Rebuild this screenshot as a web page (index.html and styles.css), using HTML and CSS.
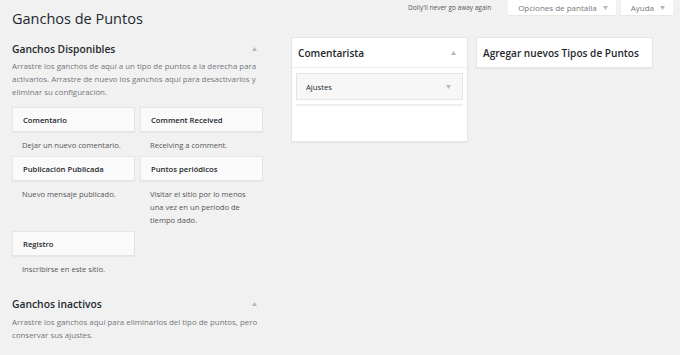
FILE: index.html
```html
<!DOCTYPE html>
<html lang="es">
<head>
    <meta charset="UTF-8">
    <title>Ganchos de Puntos</title>
    <link rel="stylesheet" href="styles.css">
</head>
<body>

    <div class="header">
        <h1>Ganchos de Puntos</h1>
        <div class="meta-links">
            <span class="dolly">Dolly'll never go away again</span>
            <span class="meta-tab">Opciones de pantalla <svg class="arrow" width="5" height="4" viewBox="0 0 5 4"><polygon points="0,0 5,0 2.5,4"/></svg></span>
            <span class="meta-tab">Ayuda <svg class="arrow" width="5" height="4" viewBox="0 0 5 4"><polygon points="0,0 5,0 2.5,4"/></svg></span>
        </div>
    </div>

    <div class="main">
        <div class="hooks-col">
            <div class="section-title">
                <h2>Ganchos Disponibles</h2>
                <svg class="arrow" width="5" height="4" viewBox="0 0 5 4"><polygon points="0,4 5,4 2.5,0"/></svg>
            </div>
            <p class="section-desc">Arrastre los ganchos de aquí a un tipo de puntos a la derecha para activarlos. Arrastre de nuevo los ganchos aquí para desactivarlos y eliminar su configuración.</p>

            <div class="hook-grid">
                <div class="hook">
                    <div class="hook-box">Comentario</div>
                    <div class="hook-desc">Dejar un nuevo comentario.</div>
                </div>
                <div class="hook">
                    <div class="hook-box">Comment Received</div>
                    <div class="hook-desc">Receiving a comment.</div>
                </div>
                <div class="hook">
                    <div class="hook-box">Publicación Publicada</div>
                    <div class="hook-desc">Nuevo mensaje publicado.</div>
                </div>
                <div class="hook">
                    <div class="hook-box">Puntos periódicos</div>
                    <div class="hook-desc">Visitar el sitio por lo menos una vez en un período de tiempo dado.</div>
                </div>
                <div class="hook">
                    <div class="hook-box">Registro</div>
                    <div class="hook-desc">Inscribirse en este sitio.</div>
                </div>
            </div>

            <div class="section-title inactive">
                <h2>Ganchos inactivos</h2>
                <svg class="arrow" width="5" height="4" viewBox="0 0 5 4"><polygon points="0,4 5,4 2.5,0"/></svg>
            </div>
            <p class="section-desc">Arrastre los ganchos aquí para eliminarlos del tipo de puntos, pero conservar sus ajustes.</p>
        </div>

        <div class="panel type-panel">
            <div class="panel-head">
                <h3>Comentarista</h3>
                <svg class="arrow" width="5" height="4" viewBox="0 0 5 4"><polygon points="0,4 5,4 2.5,0"/></svg>
            </div>
            <div class="panel-body">
                <div class="settings-box">
                    <span>Ajustes</span>
                    <svg class="arrow" width="5" height="4" viewBox="0 0 5 4"><polygon points="0,0 5,0 2.5,4"/></svg>
                </div>
                <div class="drop-line"></div>
            </div>
        </div>

        <div class="panel add-panel">
            <div class="panel-head">
                <h3>Agregar nuevos Tipos de Puntos</h3>
            </div>
        </div>
    </div>

</body>
</html>
```

FILE: styles.css
```css
body {
    font-family: "Open Sans", "Liberation Sans", sans-serif;
    margin: 0;
    padding: 0;
    background-color: #f1f1f1;
    color: #23282d;
}

.arrow {
    fill: #b4b9be;
    flex-shrink: 0;
}

.header {
    display: flex;
    justify-content: space-between;
    align-items: flex-start;
    padding: 0 7px 0 12px;
}

h1 {
    margin: 0;
    padding-top: 9px;
    font-size: 14.5px;
    font-weight: 400;
    line-height: 20px;
}

.meta-links {
    display: flex;
    align-items: center;
    gap: 5px;
}

.dolly {
    font-size: 6.5px;
    color: #555;
    margin-right: 12px;
}

.meta-tab {
    display: flex;
    align-items: center;
    gap: 6px;
    height: 15px;
    padding: 0 8px 0 10px;
    background-color: #fff;
    font-size: 8px;
    color: #72777c;
    box-shadow: 0 1px 1px rgba(0, 0, 0, 0.04);
}

.main {
    display: flex;
    align-items: flex-start;
    margin-top: 8px;
    padding-left: 12px;
}

.hooks-col {
    width: 251px;
    padding-top: 4px;
    margin-right: 28px;
}

.section-title {
    display: flex;
    justify-content: space-between;
    align-items: center;
    padding-right: 6px;
}

.section-title.inactive {
    margin-top: 16px;
}

h2 {
    margin: 0;
    font-size: 10.3px;
    font-weight: 600;
    line-height: 16px;
}

.section-desc {
    margin: 3px 0 0;
    font-size: 7.9px;
    line-height: 13px;
    color: #72777c;
}

.inactive + .section-desc {
    margin-top: 4px;
}

.hook-grid {
    display: grid;
    grid-template-columns: 123px 123px;
    column-gap: 5px;
    margin-top: 8px;
}

.hook-box {
    height: 25px;
    display: flex;
    align-items: center;
    padding: 0 10px;
    background-color: #fafafa;
    border: 1px solid #e5e5e5;
    box-sizing: border-box;
    box-shadow: 0 1px 1px rgba(0, 0, 0, 0.04);
    font-size: 7.7px;
    font-weight: 600;
}

.hook-desc {
    padding: 7px 10px 4px;
    font-size: 7.6px;
    line-height: 13px;
    color: #555;
}

.panel {
    box-sizing: border-box;
    width: 177px;
    background-color: #fff;
    border: 1px solid #e5e5e5;
    box-shadow: 0 1px 1px rgba(0, 0, 0, 0.04);
}

.type-panel {
    margin-right: 8px;
}

.panel-head {
    height: 29px;
    display: flex;
    justify-content: space-between;
    align-items: center;
    padding: 0 11px 0 6px;
}

.type-panel .panel-head {
    border-bottom: 1px solid #eee;
}

h3 {
    margin: 0;
    font-size: 10.1px;
    font-weight: 600;
}

.panel-body {
    padding: 5px 4px 35px;
}

.settings-box {
    height: 27px;
    display: flex;
    justify-content: space-between;
    align-items: center;
    padding: 0 11px 0 9px;
    background-color: #f7f7f7;
    border: 1px solid #e5e5e5;
    box-sizing: border-box;
    font-size: 7.7px;
}

.drop-line {
    height: 2px;
    margin-top: 4px;
    background-color: #eee;
}
```
